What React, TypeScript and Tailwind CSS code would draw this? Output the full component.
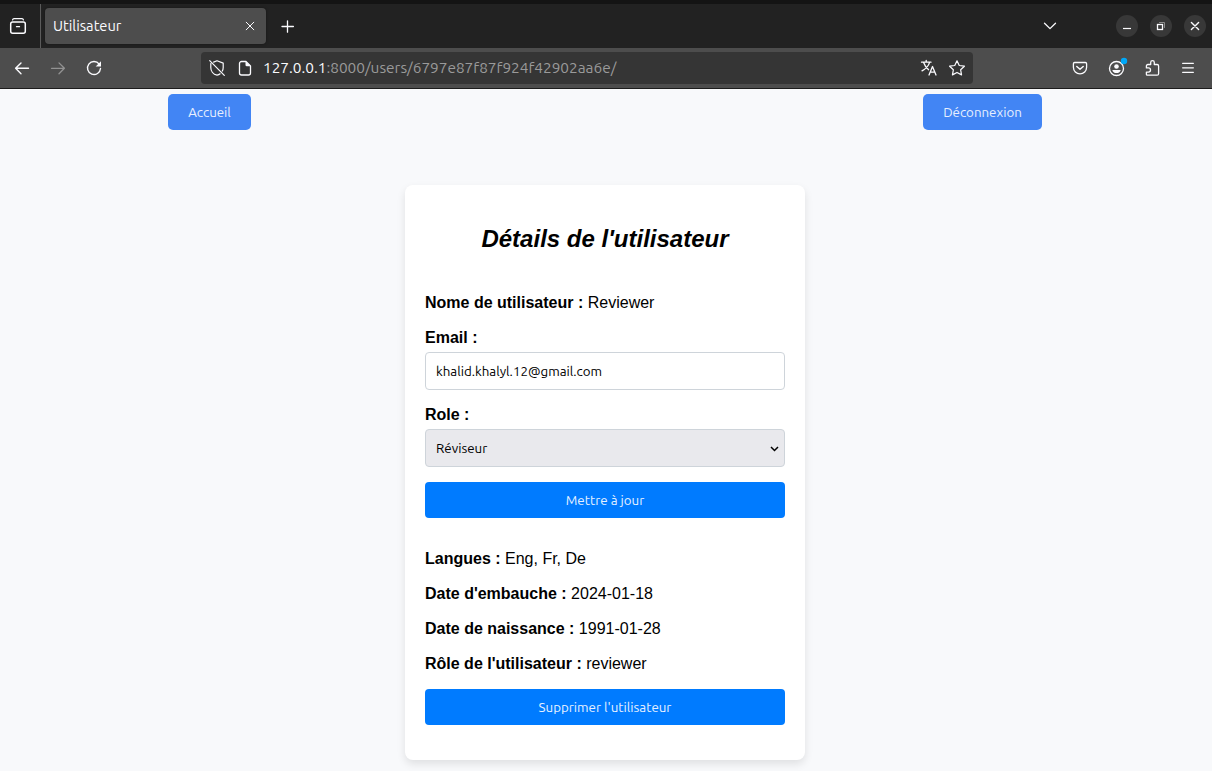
import type { ReactNode } from "react";

const ui = "font-['Ubuntu','Noto_Sans',sans-serif]";

function Icon({ children, className = "" }: { children: ReactNode; className?: string }) {
  return (
    <svg
      width="20"
      height="20"
      viewBox="0 0 20 20"
      fill="none"
      stroke="currentColor"
      strokeWidth="1.3"
      strokeLinecap="round"
      strokeLinejoin="round"
      className={`block shrink-0 overflow-visible ${className}`}
    >
      {children}
    </svg>
  );
}

function TabStrip() {
  return (
    <div className="flex h-11 items-center bg-[#222222] text-[#fbfbfe]">
      <div className="flex h-full w-[41px] shrink-0 items-center border-r border-[#5b5b5b] pl-2">
        <Icon>
          <path d="M4.6 3.8C4.8 3 5.4 2.7 6 2.7h8c.6 0 1.200.3 1.400 1.100" />
          <rect x="2.7" y="6" width="14.6" height="11.3" rx="2" strokeWidth="1.5" />
          <path d="M8.5 10.7h3" />
        </Icon>
      </div>
      <div className="ml-1 flex h-9 w-[221px] shrink-0 items-center justify-between rounded bg-[#4d4d4d] pl-2 pr-1.5 shadow-[0_0_3px_rgba(0,0,0,0.4)]">
        <span className={`${ui} text-[14.667px] leading-5`}>Utilisateur</span>
        <Icon>
          <path d="M6.2 6.2l7.6 7.6M13.8 6.2l-7.6 7.6" strokeWidth="1" />
        </Icon>
      </div>
      <Icon className="ml-3">
        <path d="M4 10.5h11.400M9.5 4.8v11.4" strokeWidth="1.3" />
      </Icon>
      <Icon className="ml-auto">
        <path d="M4.5 7.2l5.5 5.4 5.5-5.4" />
      </Icon>
      <div className="ml-14 mr-[6px] flex gap-3">
        <button className="grid size-[22px] place-items-center rounded-full bg-[#383838]">
          <Icon>
            <path d="M6 12.5h8" strokeWidth="1.2" strokeLinecap="butt" />
          </Icon>
        </button>
        <button className="grid size-[22px] place-items-center rounded-full bg-[#383838]">
          <Icon>
            <rect x="6.5" y="8.5" width="5" height="5" strokeLinejoin="miter" />
            <path d="M8.5 6.5h5v5" stroke="#8c8c8c" strokeWidth="1" strokeLinejoin="miter" />
          </Icon>
        </button>
        <button className="grid size-[22px] place-items-center rounded-full bg-[#383838]">
          <Icon>
            <path d="M6.4 6.4l7.2 7.2M13.6 6.4l-7.2 7.2" strokeWidth="1.4" />
          </Icon>
        </button>
      </div>
    </div>
  );
}

function Toolbar() {
  return (
    <div className="flex h-[41px] items-center border-b border-[#1c1c1c] bg-[#4d4d4d] text-[#fbfbfe]">
      <div className="flex w-[201px] shrink-0 items-center gap-4 pl-3">
        <Icon>
          <path d="M16.5 10.3H3.8M9 4.9l-5.4 5.4L9 15.7" strokeWidth="1.4" />
        </Icon>
        <Icon className="text-[#929292]">
          <path d="M3.5 10.3h12.7M11 4.9l5.4 5.4-5.4 5.4" />
        </Icon>
        <Icon>
          <path d="M15.2 6.1A6.5 6.5 0 1 0 16.5 10.5" strokeWidth="1.4" />
          <path d="M17 3.2v5.3h-5.3z" fill="currentColor" stroke="none" />
        </Icon>
      </div>
      <div className="flex h-8 w-[772px] shrink-0 items-center rounded bg-[#353535] px-1.5">
        <Icon>
          <path
            d="M6.6 4.1L10 2.8l6.2 2.3v4.3c0 1.3-.3 2.5-.9 3.6M13.1 15.8c-.9.8-1.9 1.2-3.1 1.4-3.8-.8-6.2-4.1-6.2-7.8V5.6M2.7 2.7l14.6 14.6"
            strokeWidth="1.2"
          />
        </Icon>
        <Icon className="ml-2">
          <path d="M11 3.5H6.500a2 2 0 0 0-2 2v9.500a2 2 0 0 0 2 2h7a2 2 0 0 0 2-2V8z" strokeWidth="1.3" />
          <path d="M10.5 3v4a1.300 1.300 0 0 0 1.300 1.300h4z" fill="currentColor" stroke="none" />
        </Icon>
        <div className={`${ui} ml-2 text-[15.4px] leading-5 text-[#9a9a9a]`}>
          <span className="text-[#fbfbfe]">127.0.0.1</span>
          <span>:8000/users/6797e87f87f924f42902aa6e/</span>
        </div>
        <Icon className="ml-auto">
          <path
            d="M2.5 4.2h9.500M7.200 2.500v1.700M10.600 4.400C9.500 8 6.500 11 3 12.800M4.600 4.500c1 3 3 5.500 5 7.200M10 17l3.500-8.500L17 17M11.200 14.200h4.600"
          />
        </Icon>
        <Icon className="ml-2">
          <path d="M10 2.8l2.250 4.700 5.150.700-3.750 3.600.9 5.100L10 14.450 5.450 16.900l.9-5.100L2.600 8.200l5.150-.7z" strokeWidth="1.2" />
        </Icon>
      </div>
      <div className="ml-auto mr-[14px] flex items-center gap-4">
        <Icon>
          <path d="M4.700 4.500h10.600a1.300 1.300 0 0 1 1.300 1.300v3.500a6.600 6.600 0 0 1-13.200 0V5.800a1.300 1.300 0 0 1 1.300-1.300z" />
          <path d="M6.800 8.500l3.200 2.800 3.200-2.800" strokeWidth="1.5" />
        </Icon>
        <Icon className="translate-x-[0.5px]">
          <circle cx="10" cy="10.5" r="7" />
          <circle cx="10" cy="8.500" r="2.300" fill="currentColor" stroke="none" />
          <path d="M5.800 11.900h8.400c-.3 2-2 3.200-4.200 3.200s-3.900-1.200-4.200-3.200z" fill="currentColor" stroke="none" />
          <circle cx="17.5" cy="3" r="3.2" fill="#00a8f8" stroke="none" />
        </Icon>
        <Icon className="translate-x-[0.5px]">
          <path d="M4.700 17.200h9.900c.9 0 1.500-.6 1.500-1.500V8c0-.9-.6-1.500-1.500-1.500h-2.800V4.500a1.800 1.800 0 0 0-3.600 0v2H5.400c-.9 0-1.500.6-1.500 1.500v1.900h2a2.100 2.100 0 0 1 0 4.200h-2v2.300c0 .5.3.8.8.8z" />
        </Icon>
        <Icon>
          <path d="M4.600 5.300h10.800M4.600 9.800h10.800M4.600 14.300h10.800" strokeWidth="1.200" />
        </Icon>
      </div>
    </div>
  );
}

function Field({ label, value }: { label: string; value?: string }) {
  return (
    <p className="h-[18px] leading-5">
      <strong>{label} :</strong> {value}
    </p>
  );
}

function UserCard() {
  return (
    <main className="mx-auto mt-[55px] flex h-[575px] w-[400px] -translate-x-px flex-col rounded-lg bg-white px-5 pt-10 text-base shadow-[0_4px_8px_rgba(0,0,0,0.1)]">
      <h1 className="text-center text-2xl leading-[27px] font-bold italic">Détails de l'utilisateur</h1>
      <div className="mt-[41px]">
        <Field label="Nome de utilisateur" value="Reviewer" />
      </div>
      <div className="mt-[17px] flex flex-col">
        <Field label="Email" />
        <input
          readOnly
          value="khalid.khalyl.12@gmail.com"
          className={`${ui} mt-1.5 h-[38px] rounded border border-[#ced4da] px-2.5 text-[13.333px] outline-none`}
        />
      </div>
      <div className="mt-[15px] flex flex-col">
        <Field label="Role" />
        <button
          className={`${ui} mt-1.5 flex h-[38px] items-center justify-between rounded border border-[#ced4da] bg-[#e9e9ed] pt-px pr-[5px] pl-2.5 text-[13.333px]`}
        >
          Réviseur
          <svg width="9" height="6" viewBox="0 0 9 6" fill="none" stroke="currentColor" strokeWidth="1.500">
            <path d="M1 1l3.500 3.500L8 1" />
          </svg>
        </button>
      </div>
      <button className={`${ui} mt-[15px] h-9 shrink-0 rounded bg-[#007bff] pt-px text-[13.333px] text-[#e6f1ff]`}>
        Mettre à jour
      </button>
      <div className="mt-[31px] flex flex-col gap-[17px]">
        <Field label="Langues" value="Eng, Fr, De" />
        <Field label="Date d'embauche" value="2024-01-18" />
        <Field label="Date de naissance" value="1991-01-28" />
        <Field label="Rôle de l'utilisateur" value="reviewer" />
      </div>
      <button className={`${ui} mt-[17px] h-9 shrink-0 rounded bg-[#007bff] pt-px text-[13.333px] text-[#e6f1ff]`}>
        Supprimer l'utilisateur
      </button>
    </main>
  );
}

export default function App() {
  return (
    <div className="flex h-[771px] w-[1212px] flex-col overflow-hidden bg-[#f8f9fb] font-['Liberation_Sans',Arial,sans-serif] text-black">
      <header className="shrink-0 border-t-4 border-[#141414]">
        <TabStrip />
        <Toolbar />
      </header>
      <nav className="flex shrink-0 justify-between pt-[5px] pr-[170px] pl-[168px]">
        <button className={`${ui} h-9 w-[83px] rounded-[5px] bg-[#4285f4] pt-px text-[13.333px] text-[#e8f0fe]`}>Accueil</button>
        <button className={`${ui} h-9 w-[119px] rounded-[5px] bg-[#4285f4] pt-px text-[13.333px] text-[#e8f0fe]`}>Déconnexion</button>
      </nav>
      <UserCard />
    </div>
  );
}
